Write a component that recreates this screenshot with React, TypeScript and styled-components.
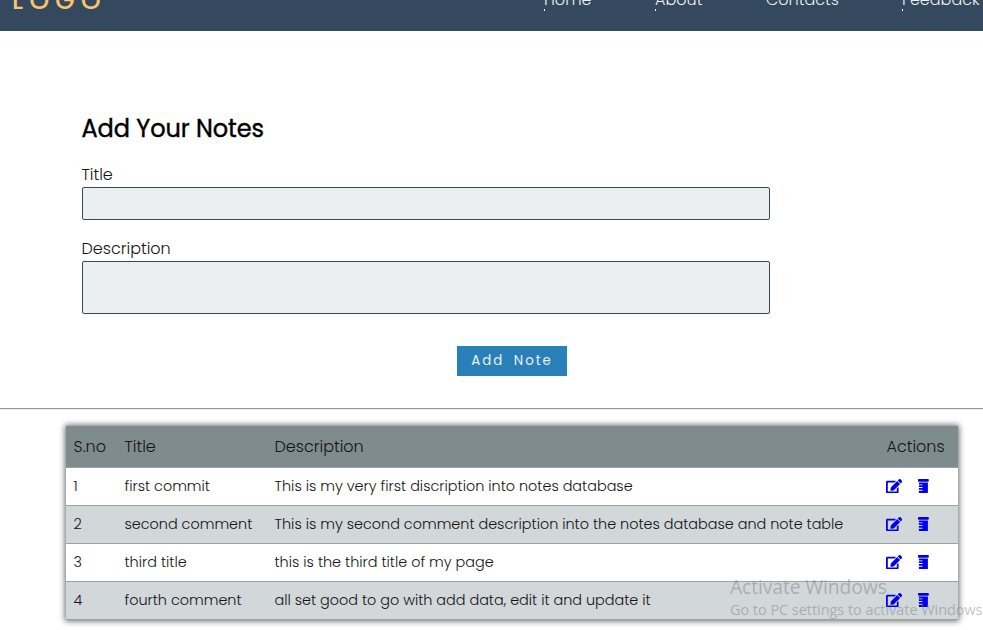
import React from "react";
import styled, { createGlobalStyle } from "styled-components";
import { FaEdit, FaPrescriptionBottle } from "react-icons/fa";

const GlobalStyle = createGlobalStyle`
  *, *::before, *::after { box-sizing: border-box; }
  body {
    margin: 0;
    background: #fff;
    color: #141414;
    font-family: Poppins, Inter, "Open Sans", sans-serif;
    font-weight: 300;
    font-size: 16px;
    overflow: hidden;
  }
`;

const Page = styled.div`
  position: relative;
  height: 630px;
  overflow: hidden;
`;

const Header = styled.header`
  display: flex;
  justify-content: space-between;
  align-items: flex-start;
  height: 31px;
  padding-left: 12px;
  background: #34495e;
  overflow: hidden;
`;

const Logo = styled.div`
  margin-top: -17px;
  color: #f8c56c;
  font-size: 25px;
  font-weight: 500;
  line-height: 36px;
  letter-spacing: 6.3px;
`;

const Nav = styled.nav`
  display: grid;
  grid-template-columns: 111px 111px 136px 81px;
  margin-top: -12px;
`;

const NavLink = styled.a<{ $tick?: boolean }>`
  height: 23px;
  line-height: 23px;
  color: #ecf0f1;
  white-space: nowrap;

  &::after {
    content: "";
    display: ${(p) => (p.$tick ? "block" : "none")};
    width: 1px;
    height: 2px;
    margin: -2px 0 0 0;
    background: #fff;
  }
`;

const Form = styled.form`
  display: flex;
  flex-direction: column;
  width: 688px;
  margin: 82px 0 0 82px;
`;

const Heading = styled.h2`
  margin: 0 0 17px -0.5px;
  height: 32px;
  line-height: 32px;
  color: #000;
  font-size: 24px;
  font-weight: 400;
  letter-spacing: -0.08px;
  -webkit-text-stroke: 0.4px #000;
`;

const Label = styled.label`
  height: 25px;
  margin-left: -0.5px;
  line-height: 26px;
`;

const Input = styled.input`
  height: 33px;
  margin: 0 0 16px;
  border: 1px solid #34495e;
  border-radius: 2px;
  background: #ebeff0;
  outline: none;
`;

const TextArea = styled.textarea`
  height: 53px;
  border: 1px solid #34495e;
  border-radius: 2px;
  background: #ebeff0;
  resize: none;
  outline: none;
`;

const AddButton = styled.button`
  width: 110px;
  height: 30px;
  margin: 32px 0 0 375px;
  padding: 0 0 1px;
  border: 0;
  background: #2980b9;
  color: #ecf0f1;
  font-family: inherit;
  font-size: 13.33px;
  font-weight: 400;
  letter-spacing: 2px;
  word-spacing: 4px;
`;

const Divider = styled.hr`
  margin: 32px 0 16px;
  height: 2px;
  border: 0;
  border-top: 1px solid #9a9a9a;
  background: #eee;
`;

const Table = styled.div`
  width: 892px;
  margin-left: 66px;
  box-shadow: 0 0 6px 1px rgba(0, 0, 0, 0.6);
`;

const Row = styled.div<{ $shaded?: boolean; $head?: boolean }>`
  display: grid;
  grid-template-columns: 51px 150px 612px 1fr;
  align-items: center;
  height: ${(p) => (p.$head ? 42 : 38)}px;
  padding-left: 7.5px;
  border-bottom: 1px solid #95a5a6;
  background: ${(p) => (p.$head ? "#7f8c8d" : p.$shaded ? "#d2d7d9" : "#fff")};
  font-size: ${(p) => (p.$head ? 16 : 14.4)}px;
`;

const Cell = styled.span`
  white-space: nowrap;
`;

const Actions = styled.div`
  display: flex;
  align-items: center;
  gap: 16px;
  margin: 0 0 1px -0.5px;
  color: #0000ee;
  font-size: 14.4px;

  svg { display: block; flex: none; }
  svg:first-child { width: 16.2px; }
  svg:last-child { width: 10.8px; }
`;

const Watermark = styled.div`
  position: absolute;
  left: 730px;
  top: 574px;
  font-family: "Segoe UI", "Open Sans", sans-serif;
  font-weight: 400;
  color: rgba(120, 120, 120, 0.45);
  white-space: nowrap;
  pointer-events: none;
`;

const WatermarkTitle = styled.div`
  font-size: 19.4px;
  line-height: 26px;
  letter-spacing: -0.15px;
`;

const WatermarkText = styled.div`
  font-size: 14.4px;
  line-height: 20px;
`;

const links = [
  { label: "Home", tick: true },
  { label: "About", tick: true },
  { label: "Contacts", tick: false },
  { label: "Feedback", tick: true },
];

const notes = [
  { title: "first commit", text: "This is my very first discription into notes database" },
  { title: "second comment", text: "This is my second comment description into the notes database and note table" },
  { title: "third title", text: "this is the third title of my page" },
  { title: "fourth comment", text: "all set good to go with add data, edit it and update it" },
];

export default function App() {
  return (
    <>
      <GlobalStyle />
      <Page>
        <Header>
          <Logo>LOGO</Logo>
          <Nav>
            {links.map((l) => (
              <NavLink key={l.label} $tick={l.tick}>
                {l.label}
              </NavLink>
            ))}
          </Nav>
        </Header>
        <Form>
          <Heading>Add Your Notes</Heading>
          <Label htmlFor="title">Title</Label>
          <Input id="title" />
          <Label htmlFor="description">Description</Label>
          <TextArea id="description" />
          <AddButton type="button">Add Note</AddButton>
        </Form>
        <Divider />
        <Table>
          <Row $head>
            <Cell>S.no</Cell>
            <Cell>Title</Cell>
            <Cell>Description</Cell>
            <Cell>Actions</Cell>
          </Row>
          {notes.map((n, i) => (
            <Row key={n.title} $shaded={i % 2 === 1}>
              <Cell>{i + 1}</Cell>
              <Cell>{n.title}</Cell>
              <Cell>{n.text}</Cell>
              <Actions>
                <FaEdit />
                <FaPrescriptionBottle />
              </Actions>
            </Row>
          ))}
        </Table>
        <Watermark>
          <WatermarkTitle>Activate Windows</WatermarkTitle>
          <WatermarkText>Go to PC settings to activate Windows</WatermarkText>
        </Watermark>
      </Page>
    </>
  );
}
